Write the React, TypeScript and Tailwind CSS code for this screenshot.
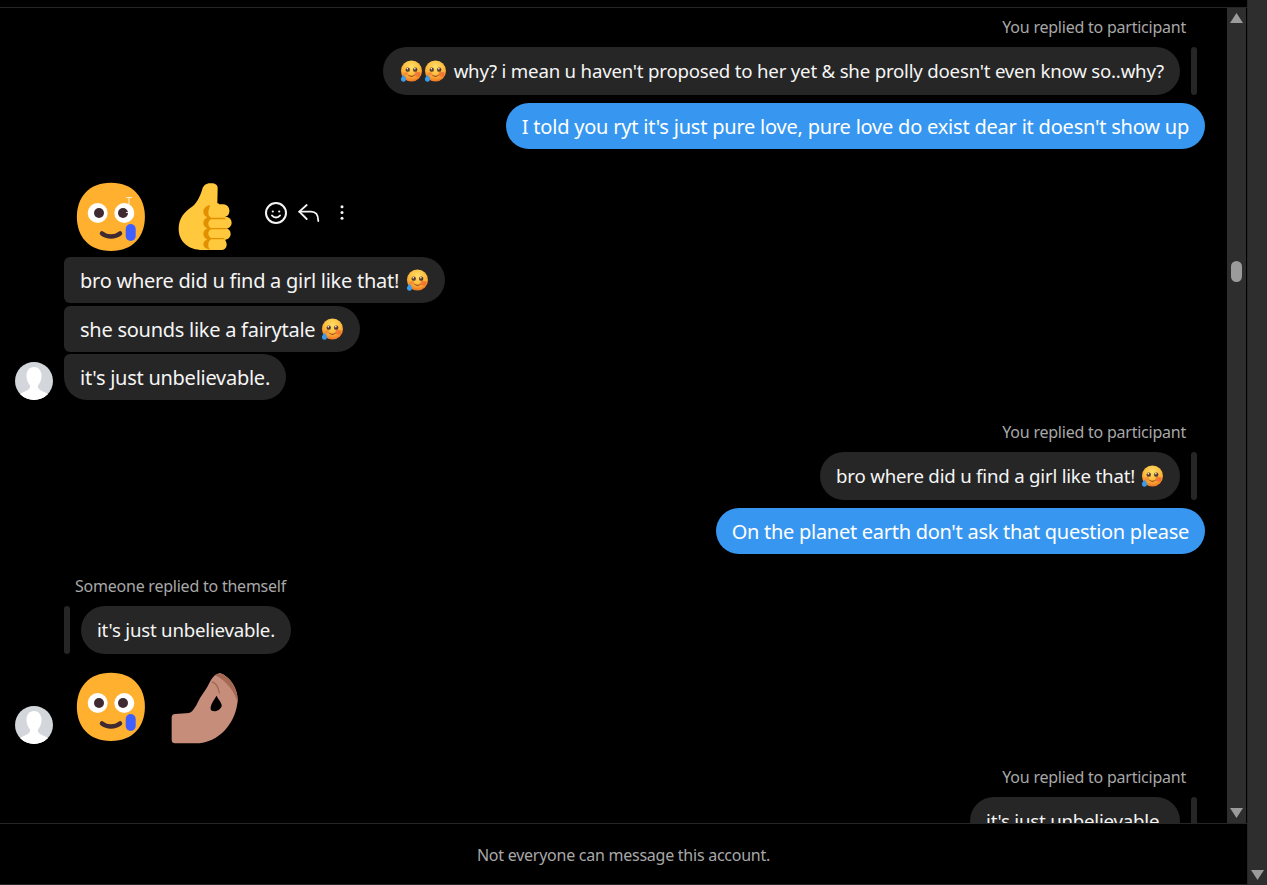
const FONT = "font-['Noto_Sans','Open_Sans',sans-serif]";

const FACE = "M15.999 29.998c9.334 0 13.999-6.268 13.999-14 0-7.73-4.665-13.998-14-13.998C6.665 2 2 8.268 2 15.999s4.664 13.999 13.999 13.999";

const TinyEmoji = ({ id, className = "" }: { id: string; className?: string }) => (
  <svg width="22" height="22" viewBox="0 0 24 24" className={`inline-block shrink-0 ${className}`}>
    <defs>
      <radialGradient id={id} cx="50%" cy="30%" r="75%">
        <stop offset="0%" stopColor="#ffdf68" />
        <stop offset="55%" stopColor="#fdb93a" />
        <stop offset="100%" stopColor="#ee6a1e" />
      </radialGradient>
    </defs>
    <circle cx="12.5" cy="12" r="11.5" fill={`url(#${id})`} />
    <ellipse cx="19" cy="15.500" rx="3.200" ry="2.600" fill="#ee5c30" opacity="0.65" />
    <ellipse cx="6.500" cy="15" rx="2.600" ry="2" fill="#ee6c30" opacity="0.5" />
    <circle cx="8.400" cy="10.500" r="2.400" fill="#5a3a2a" />
    <circle cx="16.600" cy="10.500" r="2.400" fill="#5a3a2a" />
    <circle cx="8" cy="9.500" r="0.900" fill="#fff" />
    <circle cx="16.200" cy="9.500" r="0.900" fill="#fff" />
    <path d="M8.500 15.500c2 2.400 6 2.400 8 0-.4 3.600-7.600 3.600-8 0Z" fill="#7a2f1a" />
    <path d="M3.800 16c1.600 2.200 2.800 3.200 2.800 4.800a2.800 2.800 0 0 1-5.600 0C1 19.200 2.200 18.200 3.800 16Z" fill="#3a9be8" />
  </svg>
);

const TearFace = ({ cursor }: { cursor?: boolean }) => (
  <svg width="80" height="80" viewBox="0 0 80 80" className="shrink-0">
    <path d={FACE} fill="#FFB02E" transform="scale(2.43)" />
    <circle cx="25.7" cy="35" r="10" fill="#fff" />
    <circle cx="52.3" cy="35" r="10" fill="#fff" />
    <circle cx="27" cy="35" r="5" fill="#402A32" />
    <circle cx="51" cy="35" r="5" fill="#402A32" />
    <path d="M30 55.500c5 4 13 4 18 0" fill="none" stroke="#402A32" strokeWidth="4.500" strokeLinecap="round" />
    <rect x="53.700" y="46" width="10" height="17" rx="5" fill="#3F5FFF" />
    {cursor && <path d="M54 19.500h6M57 19.500v15M54 34.500h6" fill="none" stroke="#fff" strokeWidth="0.800" />}
  </svg>
);

const ThumbsUp = () => (
  <svg width="80" height="80" viewBox="15 9 240 240" className="shrink-0">
    <path
      d="M127 42C122 60 112 82 98 94 72 112 56 130 56 162c0 38 30 63 72 63h50c14 0 22-14 18-30l-20-110H172l1-43C175 30 165 24 150 25 138 25 130 32 127 42Z"
      fill="#FFC83D"
    />
    <rect x="131" y="88" width="77" height="39" rx="18" fill="#FFC83D" />
    <rect x="131" y="125" width="84" height="36" rx="18" fill="#FFC83D" />
    <rect x="131" y="159" width="81" height="35" rx="17" fill="#FFC83D" />
    <rect x="131" y="192" width="69" height="33" rx="16" fill="#FFC83D" />
    <path d="M150 90c-14 3-20 12-20 20 0 8 5 14 12 17-7 3-12 9-12 17s5 13 12 16c-7 3-12 9-12 17s5 13 12 16c-7 3-12 8-12 15 0 8 8 14 20 16-4-5-6-10-5-16 0-6 3-11 8-15h40v-4h-40c-5-4-8-9-8-13 0-5 3-10 8-13h46v-4h-46c-5-3-8-8-8-13s3-10 8-13h43v-5h-43c-5-3-8-8-8-14 0-8 3-15 5-22Z" fill="#E19100" />
  </svg>
);

const Pinch = () => (
  <svg width="80" height="80" viewBox="0 0 240 240" className="shrink-0">
    <path
      d="M30 138 72 135c13-3 23-25 33-45l20-30c10-15 15-40 40-45 30 10 53 45 53 80-3 65-53 131-128 131H30c-6 0-10-4-10-10v-68c0-6 4-10 10-10Z"
      fill="#C68D7B"
    />
    <path d="M150 22c15-14 40 3 55 28 10 20 15 40 13 55-6-25-28-65-68-83Z" fill="#A56953" />
    <path d="M142 42c9 3 18 13 21 33" fill="none" stroke="#A56953" strokeWidth="4" strokeLinecap="round" />
    <path d="M155 83c-10 15-20 30-18 41 4 11 28 6 33-9 2-10-10-20-15-32Z" fill="#000" />
  </svg>
);

const Avatar = () => (
  <svg width="38" height="38" viewBox="0 0 38 38" className="shrink-0 rounded-full bg-[#d3d6db]">
    <path d="M19 5c5 0 7.500 4 7.500 9 0 4-1.500 7-3.500 9.500-.5 2.500 1 4 4 5.500 4 1.500 7 3 8 6.500A19 19 0 0 1 19 38 19 19 0 0 1 3 35.500c1-3.500 4-5 8-6.500 3-1.500 4.500-3 4-5.500-2-2.500-3.500-5.500-3.500-9.500 0-5 2.500-9 7.500-9Z" fill="#fff" />
  </svg>
);

const SmileIcon = () => (
  <svg width="24" height="24" viewBox="0 0 24 24" fill="none" stroke="#f5f5f5" strokeWidth="2" className="shrink-0">
    <circle cx="12" cy="12" r="10" />
    <circle cx="8.800" cy="10.500" r="1.100" fill="#f5f5f5" stroke="none" />
    <circle cx="15.200" cy="10.500" r="1.100" fill="#f5f5f5" stroke="none" />
    <path d="M8 14.500c2 2.600 6 2.600 8 0" strokeLinecap="round" />
  </svg>
);

const ReplyIcon = () => (
  <svg width="24" height="24" viewBox="0 0 24 24" fill="none" stroke="#f5f5f5" strokeWidth="1.800" strokeLinecap="round" strokeLinejoin="round" className="shrink-0">
    <path d="M9.700 4 2.300 10.700 9.700 18" />
    <path d="M2.300 10.700H14c4.500 0 7.300 3 7.300 9.300" />
  </svg>
);

const DotsIcon = () => (
  <svg width="24" height="24" viewBox="0 0 24 24" fill="#f5f5f5" className="shrink-0">
    <circle cx="12" cy="5.700" r="1.500" />
    <circle cx="12" cy="11.500" r="1.500" />
    <circle cx="12" cy="17.300" r="1.500" />
  </svg>
);

const Arrow = ({ up }: { up?: boolean }) => (
  <svg width="13" height="10" viewBox="0 0 13 10" className="shrink-0">
    <path d={up ? "M6.500 0 13 10H0Z" : "M0 0h13L6.500 10Z"} fill="#9b9b9b" />
  </svg>
);

const ReplyLabel = ({ text, className }: { text: string; className: string }) => (
  <div className={`h-5 text-[16px] leading-5 tracking-[-0.23px] text-[#a8a8a8] ${className}`}>{text}</div>
);

const Quote = ({ children, className = "" }: { children: React.ReactNode; className?: string }) => (
  <div className={`flex h-12 items-center whitespace-pre rounded-3xl bg-[#262626] px-4 text-[18.67px] tracking-[-0.21px] text-[#f5f5f5] ${className}`}>
    {children}
  </div>
);

const QuoteBar = () => <div className="h-12 w-[6px] rounded-[3px] bg-[#262626]" />;

const Sent = ({ text, className = "" }: { text: string; className?: string }) => (
  <div className="mr-[22px] mt-2 flex justify-end">
    <div className={`flex h-[46px] items-center whitespace-pre rounded-[23px] bg-[#3797f0] px-4 pt-[2px] text-[20px] text-white ${className}`}>{text}</div>
  </div>
);

const Received = ({ children, className }: { children: React.ReactNode; className: string }) => (
  <div className={`flex h-[46px] items-center whitespace-pre rounded-r-[23px] bg-[#262626] px-4 pt-[2px] text-[20px] tracking-[-0.26px] text-[#f5f5f5] ${className}`}>
    {children}
  </div>
);

const ScrollBar = () => (
  <div className="flex w-[19px] shrink-0 flex-col items-center bg-[#2e2e2e] py-[5px]">
    <Arrow up />
    <div className="mt-[238px] h-[21px] w-[11px] rounded-[6px] bg-[#9b9b9b]" />
    <div className="mt-auto">
      <Arrow />
    </div>
  </div>
);

export default function App() {
  return (
    <div className={`flex h-screen overflow-hidden bg-black ${FONT}`}>
      <div className="flex w-[1248px] shrink-0 flex-col border-r border-[#262626] pt-[7px]">
        <div className="flex min-h-0 flex-1 border-t border-[#262626]">
          <div className="min-w-0 flex-1 overflow-hidden">
            <ReplyLabel text="You replied to participant" className="mt-[9px] mr-[41px] text-right" />
            <div className="mt-[10px] mr-[30px] flex justify-end gap-[11px]">
              <Quote>
                <TinyEmoji id="e1" className="ml-px" />
                <TinyEmoji id="e2" className="ml-[2px]" />
                <span className="ml-2">why? i mean u haven't proposed to her yet &amp; she prolly doesn't even know so..why?</span>
              </Quote>
              <QuoteBar />
            </div>
            <Sent text="I told you ryt it's just pure love, pure love do exist dear it doesn't show up" className="tracking-[-0.21px]" />

            <div className="mt-[29px] ml-[72px] flex h-20 gap-[13px]">
              <TearFace cursor />
              <ThumbsUp />
              <div className="ml-[6px] flex gap-[9px] pt-[23px]">
                <SmileIcon />
                <ReplyIcon />
                <DotsIcon />
              </div>
            </div>
            <div className="-mt-px flex flex-col items-start pl-[64px]">
              <Received className="rounded-l-[6px]">
                <span>bro where did u find a girl like that!</span>
                <TinyEmoji id="e3" className="ml-[7px] mr-px -mt-[2px]" />
              </Received>
              <Received className="mt-[3px] rounded-l-[6px]">
                <span>she sounds like a fairytale</span>
                <TinyEmoji id="e4" className="ml-[6px] mr-px -mt-[2px]" />
              </Received>
              <div className="mt-[2px] -ml-[49px] flex items-end gap-[11px]">
                <Avatar />
                <Received className="rounded-tl-[6px] rounded-bl-[23px]">it's just unbelievable.</Received>
              </div>
            </div>

            <ReplyLabel text="You replied to participant" className="mt-[22px] mr-[41px] text-right" />
            <div className="mt-[10px] mr-[30px] flex justify-end gap-[11px]">
              <Quote>
                <span>bro where did u find a girl like that!</span>
                <TinyEmoji id="e5" className="ml-[6px] mr-px" />
              </Quote>
              <QuoteBar />
            </div>
            <Sent text="On the planet earth don't ask that question please" className="tracking-[-0.28px]" />

            <ReplyLabel text="Someone replied to themself" className="mt-[22px] ml-[75px]" />
            <div className="mt-[10px] ml-[64px] flex gap-[11px]">
              <QuoteBar />
              <Quote>it's just unbelievable.</Quote>
            </div>

            <div className="mt-[14px] ml-[15px] flex h-20 items-start">
              <div className="mt-[38px]">
                <Avatar />
              </div>
              <div className="ml-[19px] flex gap-[13px]">
                <TearFace />
                <Pinch />
              </div>
            </div>

            <ReplyLabel text="You replied to participant" className="mt-[19px] mr-[41px] text-right" />
            <div className="mt-[10px] mr-[30px] flex justify-end gap-[11px]">
              <Quote>it's just unbelievable.</Quote>
              <QuoteBar />
            </div>
          </div>
          <ScrollBar />
          <div className="w-px shrink-0 bg-black" />
        </div>
        <div className="flex h-[62px] shrink-0 items-center justify-center border-y border-[#262626] pt-[2px] text-[16px] tracking-[-0.25px] text-[#a8a8a8]">
          Not everyone can message this account.
        </div>
      </div>
      <div className="flex w-[19px] shrink-0 flex-col items-center justify-end bg-[#2e2e2e] pb-[5px]">
        <Arrow />
      </div>
    </div>
  );
}
